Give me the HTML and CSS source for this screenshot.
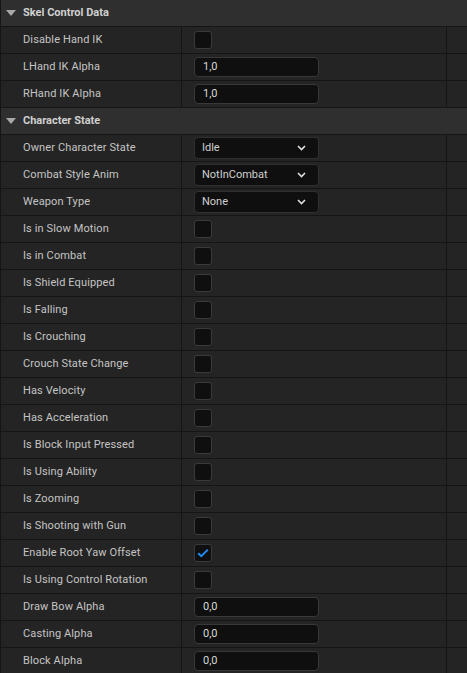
FILE: index.html
```html
<!DOCTYPE html>
<html>
<head>
<meta charset="utf-8">
<link rel="stylesheet" href="styles.css">
</head>
<body>
<div class="panel">
  <div class="header"><span class="tri"></span><span class="htext">Skel Control Data</span></div>
  <div class="row"><div class="label">Disable Hand IK</div><div class="value"><span class="cb"></span></div><div class="extra"></div></div>
  <div class="row"><div class="label">LHand IK Alpha</div><div class="value"><span class="num">1,0</span></div><div class="extra"></div></div>
  <div class="row"><div class="label">RHand IK Alpha</div><div class="value"><span class="num">1,0</span></div><div class="extra"></div></div>

  <div class="header"><span class="tri"></span><span class="htext">Character State</span></div>
  <div class="row"><div class="label">Owner Character State</div><div class="value"><span class="dd"><span>Idle</span><svg class="chev" viewBox="0 0 9 6" width="9" height="6"><path d="M1 1 L4.5 4.5 L8 1" fill="none" stroke="#e0e0e0" stroke-width="1.6"/></svg></span></div><div class="extra"></div></div>
  <div class="row"><div class="label">Combat Style Anim</div><div class="value"><span class="dd"><span>NotInCombat</span><svg class="chev" viewBox="0 0 9 6" width="9" height="6"><path d="M1 1 L4.5 4.5 L8 1" fill="none" stroke="#e0e0e0" stroke-width="1.6"/></svg></span></div><div class="extra"></div></div>
  <div class="row"><div class="label">Weapon Type</div><div class="value"><span class="dd"><span>None</span><svg class="chev" viewBox="0 0 9 6" width="9" height="6"><path d="M1 1 L4.5 4.5 L8 1" fill="none" stroke="#e0e0e0" stroke-width="1.6"/></svg></span></div><div class="extra"></div></div>
  <div class="row"><div class="label">Is in Slow Motion</div><div class="value"><span class="cb"></span></div><div class="extra"></div></div>
  <div class="row"><div class="label">Is in Combat</div><div class="value"><span class="cb"></span></div><div class="extra"></div></div>
  <div class="row"><div class="label">Is Shield Equipped</div><div class="value"><span class="cb"></span></div><div class="extra"></div></div>
  <div class="row"><div class="label">Is Falling</div><div class="value"><span class="cb"></span></div><div class="extra"></div></div>
  <div class="row"><div class="label">Is Crouching</div><div class="value"><span class="cb"></span></div><div class="extra"></div></div>
  <div class="row"><div class="label">Crouch State Change</div><div class="value"><span class="cb"></span></div><div class="extra"></div></div>
  <div class="row"><div class="label">Has Velocity</div><div class="value"><span class="cb"></span></div><div class="extra"></div></div>
  <div class="row"><div class="label">Has Acceleration</div><div class="value"><span class="cb"></span></div><div class="extra"></div></div>
  <div class="row"><div class="label">Is Block Input Pressed</div><div class="value"><span class="cb"></span></div><div class="extra"></div></div>
  <div class="row"><div class="label">Is Using Ability</div><div class="value"><span class="cb"></span></div><div class="extra"></div></div>
  <div class="row"><div class="label">Is Zooming</div><div class="value"><span class="cb"></span></div><div class="extra"></div></div>
  <div class="row"><div class="label">Is Shooting with Gun</div><div class="value"><span class="cb"></span></div><div class="extra"></div></div>
  <div class="row"><div class="label">Enable Root Yaw Offset</div><div class="value"><span class="cb"><svg viewBox="0 0 12 10" width="12" height="10"><path d="M1.2 5.2 L4.3 8.2 L10.8 1.6" fill="none" stroke="#1f8cf5" stroke-width="2"/></svg></span></div><div class="extra"></div></div>
  <div class="row"><div class="label">Is Using Control Rotation</div><div class="value"><span class="cb"></span></div><div class="extra"></div></div>
  <div class="row"><div class="label">Draw Bow Alpha</div><div class="value"><span class="num">0,0</span></div><div class="extra"></div></div>
  <div class="row"><div class="label">Casting Alpha</div><div class="value"><span class="num">0,0</span></div><div class="extra"></div></div>
  <div class="row"><div class="label">Block Alpha</div><div class="value"><span class="num">0,0</span></div><div class="extra"></div></div>
</div>
</body>
</html>
```

FILE: styles.css
```css
html, body {
  margin: 0;
  padding: 0;
  background: #151515;
  overflow: hidden;
}
.panel {
  display: flex;
  flex-direction: column;
  gap: 1px;
  background: #151515;
  width: 467px;
  font-family: Roboto, "Liberation Sans", sans-serif;
  font-size: 11px;
  color: #c4c4c4;
}
.header {
  height: 26px;
  background: #2f2f2f;
  display: flex;
  align-items: center;
  margin-left: 1px;
}
.tri {
  width: 0;
  height: 0;
  border-left: 5px solid transparent;
  border-right: 5px solid transparent;
  border-top: 6px solid #a8a8a8;
  margin-left: 5px;
  margin-right: 7px;
}
.htext {
  font-weight: bold;
  color: #d0d0d0;
  padding-bottom: 2px;
}
.row {
  height: 26px;
  display: grid;
  grid-template-columns: 180px 264px 20px;
  column-gap: 1px;
  margin-left: 1px;
}
.label, .value, .extra {
  background: #242424;
  display: flex;
  align-items: center;
}
.label {
  padding-left: 22px;
  padding-bottom: 2px;
  letter-spacing: 0.12px;
}
.value {
  padding-left: 12px;
}
.cb {
  box-sizing: border-box;
  width: 18px;
  height: 18px;
  border: 1px solid #3a3a3a;
  border-radius: 3px;
  background: #0f0f0f;
  display: flex;
  align-items: center;
  justify-content: center;
}
.num {
  box-sizing: border-box;
  width: 125px;
  height: 20px;
  border: 1px solid #383838;
  border-radius: 4px;
  background: #0f0f0f;
  padding-left: 8px;
  padding-bottom: 1px;
  display: flex;
  align-items: center;
  color: #d8d8d8;
}
.dd {
  box-sizing: border-box;
  width: 125px;
  height: 22px;
  border: 1px solid #303030;
  border-radius: 4px;
  background: #0f0f0f;
  padding-left: 7px;
  padding-right: 12px;
  display: flex;
  align-items: center;
  justify-content: space-between;
  color: #d0d0d0;
}
.dd > span {
  padding-bottom: 1px;
}
.chev {
  display: block;
}
```
